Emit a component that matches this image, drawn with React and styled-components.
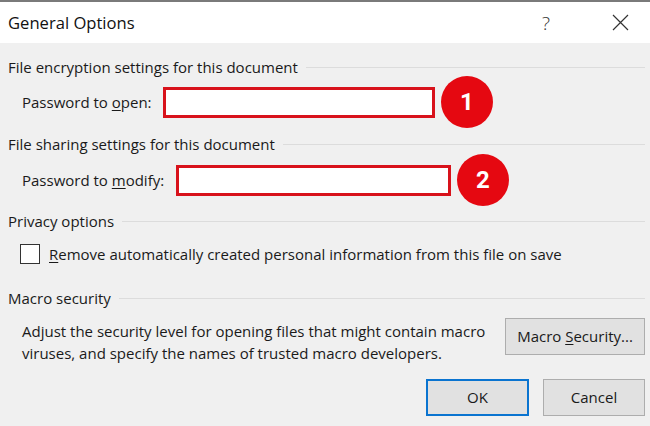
import styled, { createGlobalStyle } from 'styled-components';

const GlobalStyle = createGlobalStyle`
	html, body {
		margin: 0;
		padding: 0;
		background: #f0f0f0;
	}
	* {
		box-sizing: border-box;
	}
`;

const Dialog = styled.div`
	width: 650px;
	height: 426px;
	background: #f0f0f0;
	font-family: 'Open Sans', 'Noto Sans', sans-serif;
	font-size: 15px;
	color: #1a1a1a;
	overflow: hidden;
`;

const TitleBar = styled.div`
	height: 43px;
	background: #ffffff;
	border-top: 2px solid #7a7a7a;
	display: flex;
	align-items: center;
	padding: 0 0 0 8px;
`;

const Title = styled.div`
	flex: 1;
	font-size: 16.6px;
	color: #111;
`;

const HelpGlyph = styled.div`
	width: 20px;
	text-align: center;
	font-size: 19px;
	font-weight: 300;
	color: #333;
	margin-right: 56px;
`;

const CloseIcon = styled.svg`
	width: 17px;
	height: 17px;
	margin-right: 21px;
`;

const Body = styled.div`
	padding: 10px 5px 0 8px;
	display: flex;
	flex-direction: column;
`;

const SectionHeading = styled.div`
	height: 28px;
	display: flex;
	align-items: center;
	gap: 8px;
	margin-top: ${(p) => p.$top || 0}px;

	&::after {
		content: '';
		flex: 1;
		height: 1px;
		background: #dcdcdc;
	}
`;

const FieldRow = styled.div`
	height: 32px;
	display: flex;
	align-items: center;
	padding-left: 14px;
	margin-top: ${(p) => p.$top || 0}px;
`;

const FieldLabel = styled.div`
	width: ${(p) => p.$width}px;
`;

const PasswordBox = styled.div`
	width: ${(p) => p.$width}px;
	height: 31px;
	background: #ffffff;
	border: 3px solid #d8121b;
`;

const Badge = styled.div`
	width: 52px;
	height: 52px;
	border-radius: 50%;
	background: #e50811;
	color: #ffffff;
	font-family: 'Roboto', 'Liberation Sans', sans-serif;
	font-weight: 700;
	font-size: 24px;
	display: flex;
	align-items: center;
	justify-content: center;
	margin-left: 6px;
	flex-shrink: 0;
`;

const CheckRow = styled.label`
	height: 32px;
	display: flex;
	align-items: center;
	padding-left: 12px;
	margin-top: 3px;
	gap: 9px;
`;

const CheckBox = styled.span`
	width: 20px;
	height: 20px;
	border: 1.5px solid #333;
	background: #ffffff;
`;

const Key = styled.span`
	text-decoration: underline;
	text-underline-offset: 2px;
	text-decoration-thickness: 1px;
`;

const MacroRow = styled.div`
	display: flex;
	align-items: flex-start;
	justify-content: space-between;
	padding-left: 14px;
	margin-top: 6px;
`;

const MacroText = styled.p`
	margin: 0;
	line-height: 22px;
	padding-top: 2px;
`;

const Button = styled.button`
	font-family: inherit;
	font-size: 15px;
	color: #1a1a1a;
	height: 37px;
	width: ${(p) => p.$width}px;
	background: #e1e1e1;
	border: ${(p) => (p.$primary ? '2px solid #0a74d0' : '1px solid #adadad')};
	padding: 0;
	text-align: center;
	line-height: 1;
`;

const ButtonRow = styled.div`
	display: flex;
	justify-content: flex-end;
	gap: 14px;
	margin-top: 15px;
`;

export default function App() {
	return (
		<>
			<GlobalStyle />
			<Dialog>
				<TitleBar>
					<Title>General Options</Title>
					<HelpGlyph>?</HelpGlyph>
					<CloseIcon viewBox="0 0 17 17">
						<path d="M1 1 L16 16 M16 1 L1 16" stroke="#333" strokeWidth="1.2" fill="none" />
					</CloseIcon>
				</TitleBar>
				<Body>
					<SectionHeading>File encryption settings for this document</SectionHeading>
					<FieldRow $top={5}>
						<FieldLabel $width={141}>
							Password to <Key>o</Key>pen:
						</FieldLabel>
						<PasswordBox $width={272} />
						<Badge>1</Badge>
					</FieldRow>
					<SectionHeading $top={12}>File sharing settings for this document</SectionHeading>
					<FieldRow $top={6}>
						<FieldLabel $width={154}>
							Password to <Key>m</Key>odify:
						</FieldLabel>
						<PasswordBox $width={275} />
						<Badge>2</Badge>
					</FieldRow>
					<SectionHeading $top={11}>Privacy options</SectionHeading>
					<CheckRow>
						<CheckBox />
						<span>
							<Key>R</Key>emove automatically created personal information from this file on save
						</span>
					</CheckRow>
					<SectionHeading $top={14}>Macro security</SectionHeading>
					<MacroRow>
						<MacroText>
							Adjust the security level for opening files that might contain macro
							<br />
							viruses, and specify the names of trusted macro developers.
						</MacroText>
						<Button $width={140}>
							Macro <Key>S</Key>ecurity...
						</Button>
					</MacroRow>
					<ButtonRow>
						<Button $width={103} $primary>
							OK
						</Button>
						<Button $width={102}>Cancel</Button>
					</ButtonRow>
				</Body>
			</Dialog>
		</>
	);
}
